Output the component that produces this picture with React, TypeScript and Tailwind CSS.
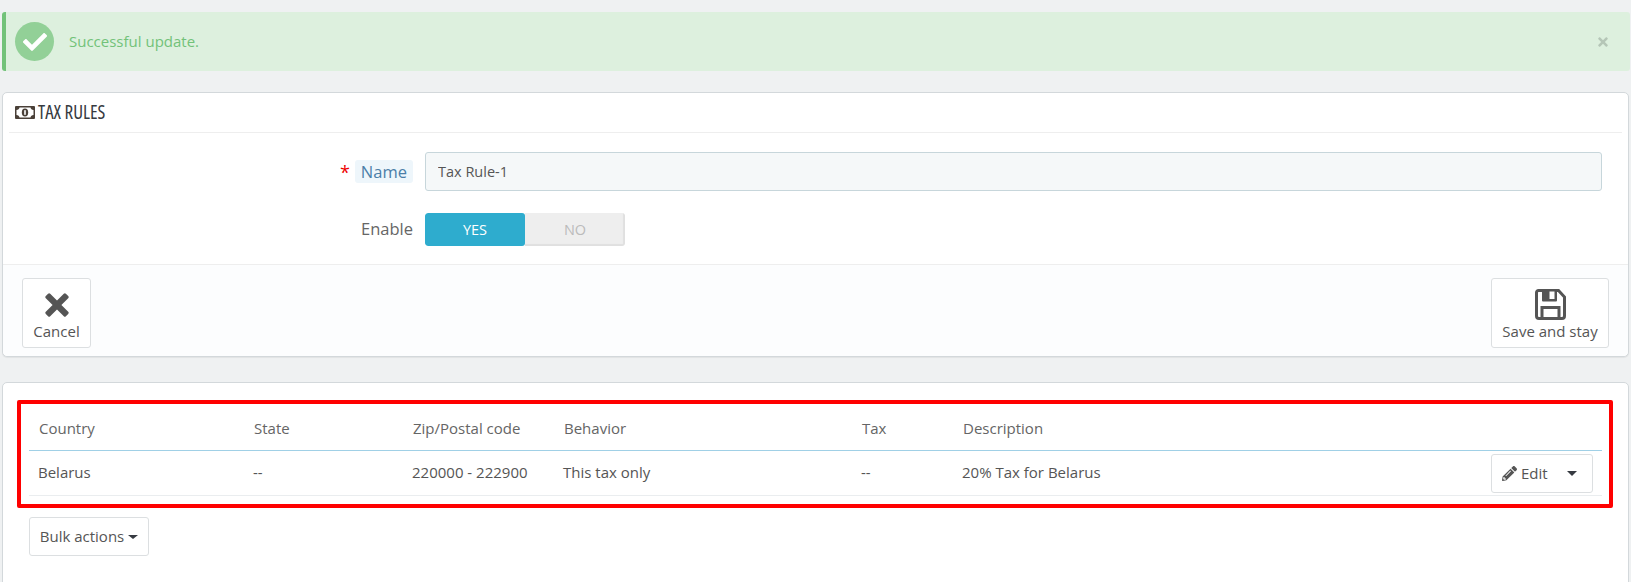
import { FaCheck, FaTimes, FaPencilAlt } from 'react-icons/fa';

const columns = [
  { title: 'Country', value: 'Belarus', width: 'w-[215px]' },
  { title: 'State', value: '--', width: 'w-[159px]' },
  { title: 'Zip/Postal code', value: '220000 - 222900', width: 'w-[151px]' },
  { title: 'Behavior', value: 'This tax only', width: 'w-[298px]' },
  { title: 'Tax', value: '--', width: 'w-[101px]' },
  { title: 'Description', value: '20% Tax for Belarus', width: 'w-[400px]' },
];

function Caret({ wide = false }: { wide?: boolean }) {
  return (
    <span
      className={
        wide
          ? 'inline-block w-0 h-0 border-x-[5px] border-x-transparent border-t-[5px] border-t-[#363a41]'
          : 'inline-block w-0 h-0 border-x-[5px] border-x-transparent border-t-[4px] border-t-[#363a41]'
      }
    />
  );
}

function MoneyIcon() {
  return (
    <svg width="20" height="13" viewBox="0 0 20 13">
      <rect width="20" height="13" rx="1" fill="#4a4038" />
      <path d="M4.5 1.5h11c.3 1.5 1.2 2.3 3 2.6v4.8c-1.8.3-2.7 1.1-3 2.6h-11c-.3-1.5-1.2-2.3-3-2.6V4.100c1.800-.3 2.700-1.100 3-2.600z" fill="#fff" />
      <ellipse cx="10" cy="6.500" rx="3.200" ry="4" fill="#4a4038" />
      <rect x="9.200" y="4.200" width="1.600" height="4.600" fill="#fff" />
    </svg>
  );
}

function CrossIcon() {
  return (
    <svg width="24" height="24" viewBox="0 0 24 24" fill="#555">
      <path d="M5.200.8 12 7.600 18.800.8a1.500 1.500 0 0 1 2.100 0l2.300 2.300a1.500 1.500 0 0 1 0 2.100L16.400 12l6.800 6.800a1.500 1.500 0 0 1 0 2.100l-2.300 2.300a1.500 1.500 0 0 1-2.100 0L12 16.400l-6.800 6.800a1.500 1.500 0 0 1-2.100 0L.8 20.900a1.500 1.500 0 0 1 0-2.100L7.600 12 .8 5.200a1.500 1.500 0 0 1 0-2.100l2.300-2.300a1.500 1.500 0 0 1 2.100 0z" />
    </svg>
  );
}

function SaveIcon() {
  return (
    <svg width="31" height="31" viewBox="0 0 31 31" fill="none">
      <path d="M3.500 1.500h20l6 6.500v19a2.500 2.500 0 0 1-2.500 2.500H4a2.500 2.500 0 0 1-2.500-2.500V3.500a2 2 0 0 1 2-2z" stroke="#555" strokeWidth="3" />
      <path d="M7 1.500h15v10a1 1 0 0 1-1 1H8a1 1 0 0 1-1-1z" fill="#555" />
      <rect x="14.500" y="2.500" width="5" height="7.500" fill="#fff" />
      <rect x="7" y="18.500" width="17" height="11" stroke="#555" strokeWidth="3" />
    </svg>
  );
}

export default function App() {
  return (
    <main className="bg-[#eff1f2] h-[582px] overflow-hidden px-[2px] pt-3 text-[15px] text-[#555] font-['Open_Sans',sans-serif]">
      <div className="relative h-[59px] flex items-center bg-[#ddf0de] border-l-[4px] border-[#72c279] rounded-[3px] mr-[-1px]">
        <span className="ml-[9px] w-[39px] h-[39px] rounded-full bg-[#92d097] flex items-center justify-center">
          <FaCheck className="text-white text-[24px]" />
        </span>
        <span className="ml-[15px] text-[#72c279]">Successful update.</span>
        <button className="absolute right-[20px] top-[23px] text-[#b5c6b7]">
          <FaTimes className="text-[14px]" />
        </button>
      </div>

      <section className="mt-[21px] h-[265px] bg-white border border-[#d3d8db] rounded-[5px] shadow-[0_1px_1px_rgba(0,0,0,0.06)] flex flex-col">
        <h3 className="mx-[6px] h-[40px] flex items-center gap-[3px] pl-[6px] border-b border-[#eee] text-[#363a41] text-[19px] [font-stretch:75%] uppercase">
          <MoneyIcon />
          <span>Tax Rules</span>
        </h3>

        <div className="mt-[19px] flex items-center h-[39px]">
          <div className="w-[410px] flex justify-end items-center">
            <span className="text-[#e00] text-[18px] leading-none mr-[5px]">*</span>
            <span className="px-[6px] h-[23px] leading-[23px] rounded-[3px] bg-[#eef6fb] text-[16.500px] text-[#4b7ea8]">Name</span>
          </div>
          <input
            readOnly
            value="Tax Rule-1"
            className="ml-[12px] w-[1177px] h-[39px] px-[12px] bg-[#f5f8f9] border border-[#c7d6db] rounded-[3px] text-[14.500px] text-[#555]"
          />
        </div>

        <div className="mt-[22px] flex items-center h-[33px]">
          <div className="w-[410px] text-right text-[16.500px] text-[#666]">Enable</div>
          <div className="ml-[12px] w-[200px] h-[33px] flex rounded-[3px] overflow-hidden text-[14.500px]">
            <span className="w-[100px] bg-[#2eacce] text-white flex items-center justify-center rounded-[3px]">YES</span>
            <span className="w-[100px] bg-[#eee] text-[#bbb] flex items-center justify-center shadow-[inset_-2px_-2px_1px_rgba(0,0,0,0.06)]">NO</span>
          </div>
        </div>

        <footer className="mt-[18px] flex-1 bg-[#fcfdfe] border-t border-[#eee] rounded-b-[5px] px-[19px] flex items-start justify-between pt-[13px]">
          <button className="w-[69px] h-[70px] bg-white border border-[#dcdfe1] rounded-[3px] flex flex-col items-center pt-[14px] text-[#555]">
            <CrossIcon />
            <span className="mt-[4px] leading-[20px]">Cancel</span>
          </button>
          <button className="w-[118px] h-[70px] bg-white border border-[#dcdfe1] rounded-[3px] flex flex-col items-center pt-[10px] text-[#555]">
            <SaveIcon />
            <span className="mt-[1px] leading-[20px]">Save and stay</span>
          </button>
        </footer>
      </section>

      <section className="mt-[25px] h-[205px] bg-white border border-[#d3d8db] rounded-[5px]">
        <div className="mt-[17px] ml-[14px] w-[1596px] h-[108px] border-[4px] border-[#f00] rounded-[2px] pl-[8px]">
          <table className="table-fixed w-[1573px]">
            <colgroup>
              {columns.map((c) => (
                <col key={c.title} className={c.width} />
              ))}
              <col />
            </colgroup>
            <thead>
              <tr className="h-[46px]">
                {columns.map((c) => (
                  <th key={c.title} className="pl-[10px] pt-[3px] text-left font-normal text-[#656565] border-b border-[#a0d0e6]">{c.title}</th>
                ))}
                <th className="border-b border-[#a0d0e6]" />
              </tr>
            </thead>
            <tbody>
              <tr className="h-[45px]">
                {columns.map((c) => (
                  <td key={c.title} className="pl-[9px] border-b border-[#eaedef]">{c.value}</td>
                ))}
                <td className="border-b border-[#eaedef]" />
              </tr>
            </tbody>
          </table>
          <button className="relative float-right mr-[16px] mt-[-42px] w-[102px] h-[39px] bg-white border border-[#dcdfe1] rounded-[3px] flex items-center pl-[10px] text-[#555]">
            <FaPencilAlt className="text-[15px]" />
            <span className="ml-[4px]">Edit</span>
            <span className="ml-[19px] flex"><Caret wide /></span>
          </button>
        </div>

        <button className="mt-[9px] ml-[26px] w-[120px] h-[39px] bg-white border border-[#dcdfe1] rounded-[3px] flex items-center justify-center gap-[4px] text-[#555]">
          <span>Bulk actions</span>
          <Caret />
        </button>
      </section>
    </main>
  );
}
